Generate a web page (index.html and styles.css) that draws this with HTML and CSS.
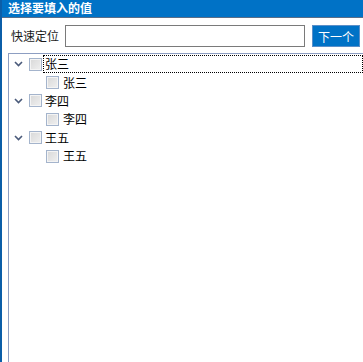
FILE: index.html
```html
<!DOCTYPE html>
<html lang="zh-CN">
<head>
    <meta charset="UTF-8">
    <title>选择要填入的值</title>
    <link rel="stylesheet" href="styles.css">
</head>
<body>
    <div class="dialog">
        <div class="title-bar">选择要填入的值</div>
        <div class="search-row">
            <label class="search-label">快速定位</label>
            <input type="text" class="search-input">
            <button class="next-btn">下一个</button>
        </div>
        <div class="tree">
            <div class="node">
                <div class="row">
                    <span class="toggle"><svg width="9" height="6" viewBox="0 0 9 6"><path d="M1 1 L4.5 4.5 L8 1" fill="none" stroke="#4a5a7a" stroke-width="1.6"/></svg></span>
                    <span class="check"></span>
                    <span class="text focused">张三</span>
                </div>
                <div class="row child">
                    <span class="check"></span>
                    <span class="text">张三</span>
                </div>
            </div>
            <div class="node">
                <div class="row">
                    <span class="toggle"><svg width="9" height="6" viewBox="0 0 9 6"><path d="M1 1 L4.5 4.5 L8 1" fill="none" stroke="#4a5a7a" stroke-width="1.6"/></svg></span>
                    <span class="check"></span>
                    <span class="text">李四</span>
                </div>
                <div class="row child">
                    <span class="check"></span>
                    <span class="text">李四</span>
                </div>
            </div>
            <div class="node">
                <div class="row">
                    <span class="toggle"><svg width="9" height="6" viewBox="0 0 9 6"><path d="M1 1 L4.5 4.5 L8 1" fill="none" stroke="#4a5a7a" stroke-width="1.6"/></svg></span>
                    <span class="check"></span>
                    <span class="text">王五</span>
                </div>
                <div class="row child">
                    <span class="check"></span>
                    <span class="text">王五</span>
                </div>
            </div>
        </div>
    </div>
</body>
</html>
```

FILE: styles.css
```css
html, body {
    margin: 0;
    padding: 0;
    height: 100%;
    overflow: hidden;
}
body {
    font-family: "Noto Sans CJK SC", "Microsoft YaHei", sans-serif;
    font-size: 12px;
    color: #000;
    background: #fff;
}
.dialog {
    height: 100%;
    border-left: 2px solid #0b5ea8;
    display: flex;
    flex-direction: column;
    box-sizing: border-box;
}
.title-bar {
    background: #0072c6;
    color: #fff;
    font-weight: bold;
    height: 17px;
    line-height: 16px;
    padding-left: 6px;
    border-bottom: 1px solid #5a6e88;
}
.search-row {
    display: flex;
    align-items: center;
    padding: 7px 3px 0 9px;
    height: 22px;
}
.search-label {
    width: 54px;
    line-height: 22px;
    color: #1a1a1a;
}
.search-input {
    width: 240px;
    height: 22px;
    box-sizing: border-box;
    border: 1px solid #7a7a7a;
    margin: 0;
    padding: 0 3px;
    outline: none;
}
.next-btn {
    margin-left: 7px;
    width: 48px;
    height: 22px;
    background: #0072c6;
    border: 1px solid #5a8fc8;
    color: #fff;
    font-family: inherit;
    font-size: 12px;
    padding: 0;
}
.tree {
    flex: 1;
    margin: 6px 0 0 6px;
    border-left: 1px solid #8d9ec2;
    border-top: 1px solid #8d9ec2;
    padding-top: 1px;
}
.row {
    display: flex;
    align-items: center;
    height: 18.4px;
}
.toggle {
    width: 20px;
    display: flex;
    justify-content: flex-end;
}
.toggle svg {
    display: block;
    margin-right: 6px;
}
.check {
    width: 11px;
    height: 11px;
    border: 1px solid #a4b4cc;
    background: linear-gradient(135deg, #d8d8d8, #f0f0f0);
    box-shadow: inset 0 0 0 1px #f4f4f4;
}
.text {
    margin-left: 1px;
    padding: 0 1px;
    line-height: 16px;
    border: 1px dotted transparent;
}
.text.focused {
    flex: 1;
    border: 1px dotted #000;
}
.row.child {
    padding-left: 37px;
}
.row.child .text {
    margin-left: 2px;
}
```
